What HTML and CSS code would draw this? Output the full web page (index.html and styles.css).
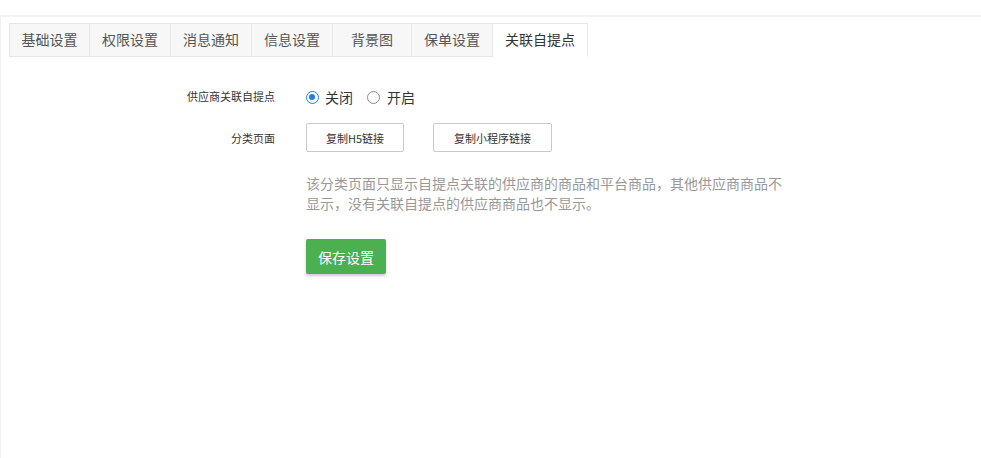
FILE: index.html
```html
<!DOCTYPE html>
<html lang="zh-CN">
<head>
<meta charset="utf-8">
<title>关联自提点</title>
<link rel="stylesheet" href="styles.css">
</head>
<body>
<div class="topbar"></div>
<div class="page">
  <ul class="tabs">
    <li class="tab">基础设置</li>
    <li class="tab">权限设置</li>
    <li class="tab">消息通知</li>
    <li class="tab">信息设置</li>
    <li class="tab">背景图</li>
    <li class="tab">保单设置</li>
    <li class="tab active">关联自提点</li>
  </ul>
  <form class="form">
    <div class="row row-radio">
      <label class="label">供应商关联自提点</label>
      <div class="control radios">
        <span class="radio checked"><i class="dot"></i>关闭</span>
        <span class="radio"><i class="dot"></i>开启</span>
      </div>
    </div>
    <div class="row row-buttons">
      <label class="label">分类页面</label>
      <div class="control buttons">
        <button type="button" class="btn btn-h5">复制H5链接</button>
        <button type="button" class="btn btn-mini">复制小程序链接</button>
      </div>
    </div>
    <div class="row row-desc">
      <span class="label"></span>
      <p class="desc">该分类页面只显示自提点关联的供应商的商品和平台商品，其他供应商商品不显示，没有关联自提点的供应商商品也不显示。</p>
    </div>
    <div class="row row-save">
      <span class="label"></span>
      <div class="control">
        <button type="button" class="save">保存设置</button>
      </div>
    </div>
  </form>
</div>
</body>
</html>
```
FILE: styles.css
```css
* { box-sizing: border-box; }
html, body { margin: 0; padding: 0; background: #fff; }
body {
  font-family: "Noto Sans CJK SC", "Noto Sans", "Liberation Sans", sans-serif;
  color: #333;
  height: 458px;
  overflow: hidden;
}
.topbar {
  height: 17px;
  border-bottom: 2px solid #f3f3f3;
}
.page {
  border-left: 1px solid #f0f0f0;
  height: 441px;
  padding: 6px 0 0 8px;
}
.tabs {
  list-style: none;
  margin: 0;
  padding: 0;
  display: flex;
  height: 34px;
}
.tab {
  height: 34px;
  width: 81px;
  padding: 0;
  white-space: nowrap;
  border: 1px solid #e6e6e6;
  border-left: none;
  background: #f7f7f7;
  font-size: 14px;
  line-height: 31px;
  color: #555;
  text-align: center;
}
.tab:first-child { border-left: 1px solid #e6e6e6; width: 81px; }
.tab:nth-child(5) { width: 79px; }
.tab.active {
  width: 95px;
  background: #fff;
  color: #333;
  border-bottom-color: #fff;
}
.form {
  margin: 29px 0 0 -8px;
}
.row {
  display: grid;
  grid-template-columns: 274px 1fr;
  column-gap: 31px;
  align-items: center;
}
.label {
  text-align: right;
  font-size: 11px;
  color: #333;
}
.row-radio { height: 22px; }
.row-radio .label { margin-top: -3px; }
.radios { display: flex; align-items: center; font-size: 14px; }
.radio {
  display: inline-flex;
  align-items: center;
  margin-right: 14px;
  line-height: 20px;
}
.dot {
  width: 13px;
  height: 13px;
  border-radius: 50%;
  border: 1.5px solid #8c8c8c;
  margin-right: 6px;
  position: relative;
  display: inline-block;
}
.radio + .radio .dot { margin-right: 7px; }
.radio.checked .dot { border-color: #1e7ee6; }
.radio.checked .dot::after {
  content: "";
  position: absolute;
  left: 2px; top: 2px;
  width: 6px; height: 6px;
  border-radius: 50%;
  background: #1e7ee6;
}
.row-buttons { margin-top: 15px; }
.buttons { display: flex; gap: 29px; }
.btn {
  height: 29px;
  padding: 0;
  border: 1px solid #c9c9c9;
  border-radius: 2px;
  background: #fff;
  font-family: inherit;
  font-size: 11px;
  color: #333;
}
.btn-h5 { width: 98px; }
.btn-mini { width: 119px; }
.row-desc { margin-top: 21px; align-items: start; }
.desc {
  margin: 0;
  width: 480px;
  font-size: 14px;
  line-height: 20px;
  color: #999;
}
.row-save { margin-top: 26px; }
.save {
  width: 80px;
  height: 35px;
  border: none;
  border-radius: 2px;
  background: #4caf50;
  color: #fff;
  font-family: inherit;
  font-size: 14px;
  box-shadow: 0 2px 3px rgba(0,0,0,0.2);
}
```
